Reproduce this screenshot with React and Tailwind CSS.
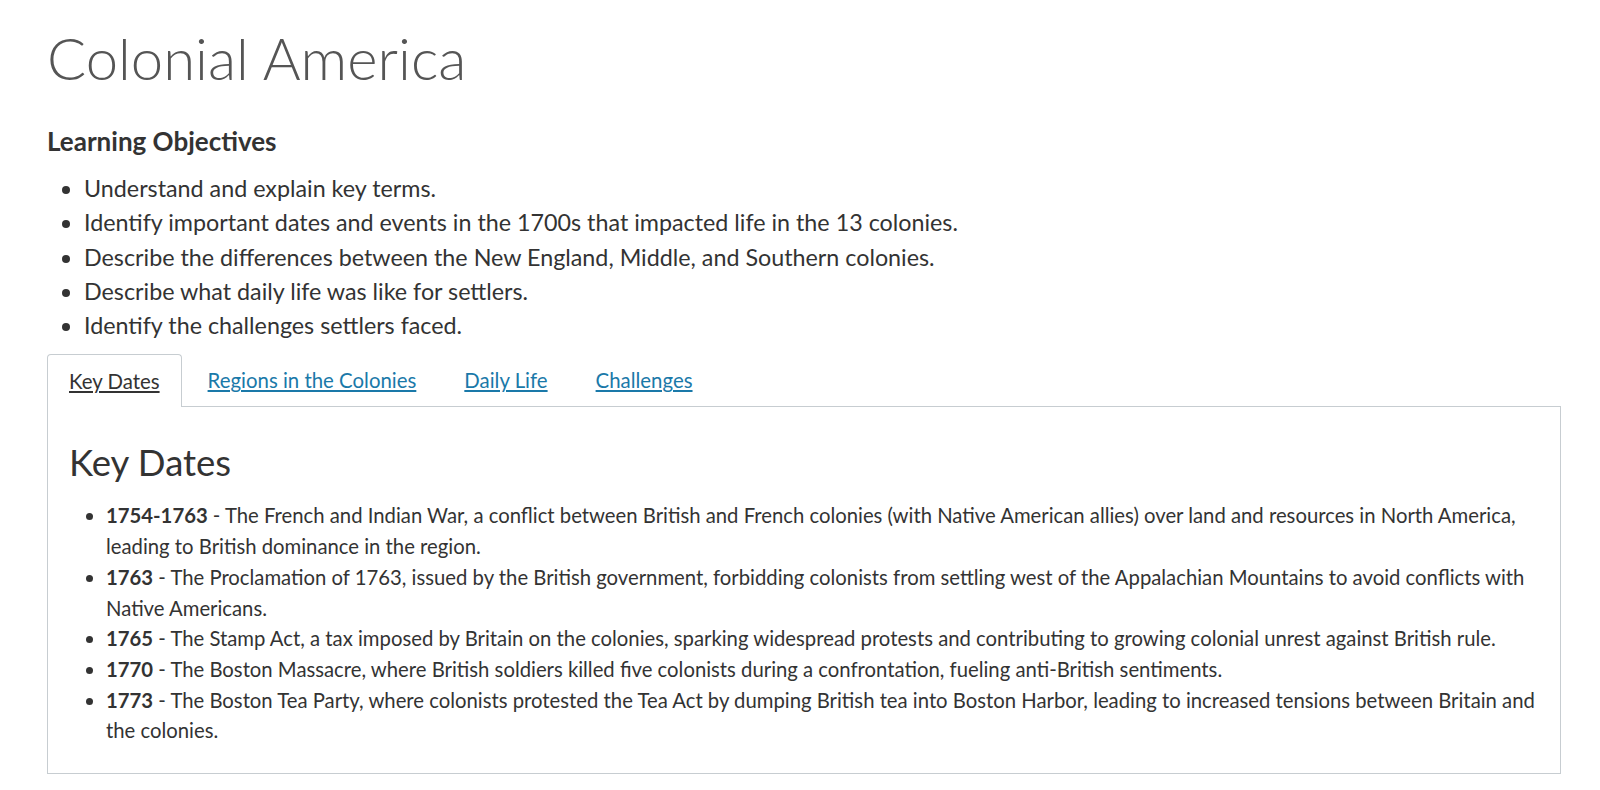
export default function App() {
  const objectives = [
    "Understand and explain key terms.",
    "Identify important dates and events in the 1700s that impacted life in the 13 colonies.",
    "Describe the differences between the New England, Middle, and Southern colonies.",
    "Describe what daily life was like for settlers.",
    "Identify the challenges settlers faced.",
  ];
  const dates = [
    ["1754-1763", "The French and Indian War, a conflict between British and French colonies (with Native American allies) over land and resources in North America, leading to British dominance in the region."],
    ["1763", "The Proclamation of 1763, issued by the British government, forbidding colonists from settling west of the Appalachian Mountains to avoid conflicts with Native Americans."],
    ["1765", "The Stamp Act, a tax imposed by Britain on the colonies, sparking widespread protests and contributing to growing colonial unrest against British rule."],
    ["1770", "The Boston Massacre, where British soldiers killed five colonists during a confrontation, fueling anti-British sentiments."],
    ["1773", "The Boston Tea Party, where colonists protested the Tea Act by dumping British tea into Boston Harbor, leading to increased tensions between Britain and the colonies."],
  ];
  return (
    <div className="bg-white text-[#333]" style={{ fontFamily: "Lato, 'Noto Sans', sans-serif" }}>
      <div className="ml-[47px] w-[1514px] pt-[22px]">
        <h1 className="text-[58px] font-light leading-[72px] text-[#555]">Colonial America</h1>
        <h2 className="mt-[31px] text-[26px] font-bold leading-[32px] text-[#333]">Learning Objectives</h2>
        <ul className="mt-[14px] list-disc pl-[37px] text-[23.3px] leading-[34.3px] text-[#333]">
          {objectives.map((o) => (
            <li key={o}>{o}</li>
          ))}
        </ul>
        <div className="mt-[12px] flex items-end">
          <div className="relative -mb-px z-10 border border-b-0 border-[#c7cdd1] rounded-t-[4px] bg-white px-[21px] pt-[14px] pb-[13px] text-[20.4px] leading-[25px] underline text-[#333]">
            Key Dates
          </div>
          <div className="flex gap-[48px] pl-[26px] pb-[13px] text-[20.4px] leading-[25px] text-[#1a79a9] underline">
            <span>Regions in the Colonies</span>
            <span>Daily Life</span>
            <span>Challenges</span>
          </div>
        </div>
        <div className="border border-[#c7cdd1] px-[21px] pt-[33px] pb-[27px]">
          <h3 className="text-[36.5px] leading-[44px] text-[#333]">Key Dates</h3>
          <ul className="mt-[16px] list-disc pl-[37px] text-[20.3px] leading-[30.7px] text-[#333]">
            {dates.map(([d, t]) => (
              <li key={d}>
                <strong className="font-bold">{d}</strong> - {t}
              </li>
            ))}
          </ul>
        </div>
      </div>
    </div>
  );
}
